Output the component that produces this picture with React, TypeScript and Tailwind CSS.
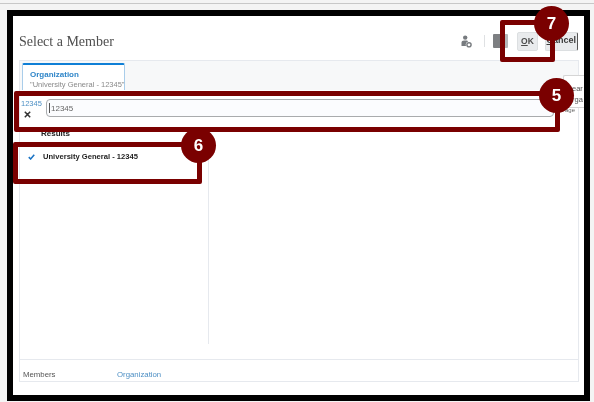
const serif = "font-['Liberation_Serif',serif]"

function Callout({ className }: { className: string }) {
  return <div className={`absolute border-[5px] border-[#7a0000] rounded-[2px] ${className}`} />
}

function Badge({ n, className }: { n: number; className: string }) {
  return (
    <div className={`absolute w-[35px] h-[35px] rounded-full bg-[#7a0000] text-white font-bold text-[17px] flex items-center justify-center ${className}`}>
      {n}
    </div>
  )
}

function MemberIcon() {
  return (
    <svg width="11" height="13" viewBox="0 0 11 13" className="text-[#777b7f]">
      <circle cx="4.2" cy="2.6" r="2.2" fill="currentColor" />
      <path d="M.5 11V7.6C.5 6.4 1.6 5.6 3 5.6h2.2c1 0 1.7.4 2 1A3.2 3.2 0 0 0 5 11z" fill="currentColor" />
      <circle cx="8" cy="9.8" r="2.1" fill="none" stroke="currentColor" strokeWidth="1.4" />
    </svg>
  )
}

export default function App() {
  return (
    <div className="relative w-[594px] h-[402px] overflow-hidden bg-[#f4f4f4] font-['Liberation_Sans',sans-serif] pt-[3px] blur-[0.3px]">
      <div className="h-px bg-[#c8c8c8]" />
      <div className="ml-[7px] mt-[6px] w-[583px] h-[391px] border-[6px] border-black bg-white px-[6px] flex flex-col">
        {/* header */}
        <div className="h-[44px] shrink-0 flex items-center pt-[6px]">
          <h1 className={`${serif} text-[14px] text-[#4f4f4f] flex-1`}>Select a Member</h1>
          <MemberIcon />
          <div className="w-px h-[12px] bg-[#dfe1e3] ml-[12px]" />
          <div className="w-[15px] h-[14px] bg-[#7d7f82] border-r-[3px] border-[#b5b7b9] ml-[8px] rounded-[1px]" />
          <button className="w-[21px] h-[19px] ml-[9px] rounded-[2px] bg-[#e9ebed] border border-[#dcdfe1] text-[8.5px] font-bold text-[#4c4c4c]">
            <span className="underline">O</span>K
          </button>
          <button className="w-[33px] h-[19px] ml-[7px] rounded-[2px] bg-[#e9ebed] border border-[#dcdfe1] border-r-[#555] text-[9px] font-bold text-[#3c3c3c] flex items-center justify-end pr-[1px] whitespace-nowrap">
            <span><span className="underline">C</span>ancel</span>
          </button>
        </div>

        {/* panel */}
        <div className="w-[560px] h-[322px] border border-[#e6e9ee] flex flex-col">
          <div className="h-[29px] shrink-0 bg-[#f7f8f9] pl-[2px] pt-[2px]">
            <div className="w-[103px] h-[27px] bg-white border-x border-[#a9cdea] border-t-[2px] border-t-[#0f7fd6] rounded-t-[2px] pl-[7px] pt-[4px]">
              <div className="text-[8px] font-bold text-[#2f86c9] leading-[11px]">Organization</div>
              <div className="text-[7.5px] text-[#8a8a8a] leading-[10px] whitespace-nowrap">"University General - 12345"</div>
            </div>
          </div>
          <div className="h-[39px] shrink-0 flex items-start pt-[9px] pl-[1px]">
            <div className="w-[25px] shrink-0">
              <div className="text-[7.5px] text-[#4d8fc4] leading-[10px]">12345</div>
              <svg width="7" height="7" viewBox="0 0 7 7" className="ml-[3px] mt-[2px]">
                <path d="M.8.8l5.4 5.4M6.2.8L.8 6.2" stroke="#333" strokeWidth="1.5" />
              </svg>
            </div>
            <div className="relative">
              <input
                readOnly
                value="12345"
                className="block w-[508px] h-[18px] border border-[#a9abad] rounded-[4px] bg-[#fbfcfe] pl-[4px] text-[8px] text-[#666] outline-none"
              />
              <div className="absolute left-[3px] top-[4px] w-px h-[10px] bg-[#555]" />
            </div>
          </div>
          <div className="flex-1 min-h-0 flex flex-col">
            <div className="w-[189px] h-[215px] shrink-0 border-r border-[#e6e9ee]">
              <div className="pl-[21px] text-[8px] font-bold text-[#222] leading-[10px]">Results</div>
              <div className="flex items-center pl-[8px] mt-[12px] h-[12px]">
                <svg width="7" height="6" viewBox="0 0 8 7">
                  <path d="M.8 3.6l2.2 2.2L7.2.9" fill="none" stroke="#1a73c4" strokeWidth="1.8" />
                </svg>
                <span className="ml-[8px] text-[7.6px] font-bold text-[#1e1e1e] whitespace-nowrap">University General - 12345</span>
              </div>
            </div>
            <div className="mt-auto h-[22px] border-t border-[#e6e9ee] flex items-end text-[7.8px] pl-[3px]">
              <span className="w-[94px] text-[#555]">Members</span>
              <span className="text-[#4d8fc4]">Organization</span>
            </div>
          </div>
        </div>
      </div>

      {/* tooltip cut off by the frame */}
      <div className="absolute left-[563px] top-[75px] w-[21px] h-[33px] bg-white border border-r-0 border-[#d5d5d5] rounded-l-[2px] text-[7.5px] text-[#555] leading-[11px] pt-[7px] pl-[8px] whitespace-nowrap">
        <div>ear</div>
        <div>rga</div>
      </div>
      <div className="absolute left-[565px] top-[106px] text-[6px] text-[#666]">age</div>

      {/* annotations */}
      <Callout className="left-[500px] top-[20px] w-[55px] h-[42px]" />
      <Callout className="left-[14px] top-[91px] w-[546px] h-[41px]" />
      <Callout className="left-[13px] top-[142px] w-[189px] h-[42px]" />
      <Badge n={7} className="left-[534px] top-[6px]" />
      <Badge n={5} className="left-[539px] top-[78px]" />
      <Badge n={6} className="left-[181px] top-[128px]" />
    </div>
  )
}
